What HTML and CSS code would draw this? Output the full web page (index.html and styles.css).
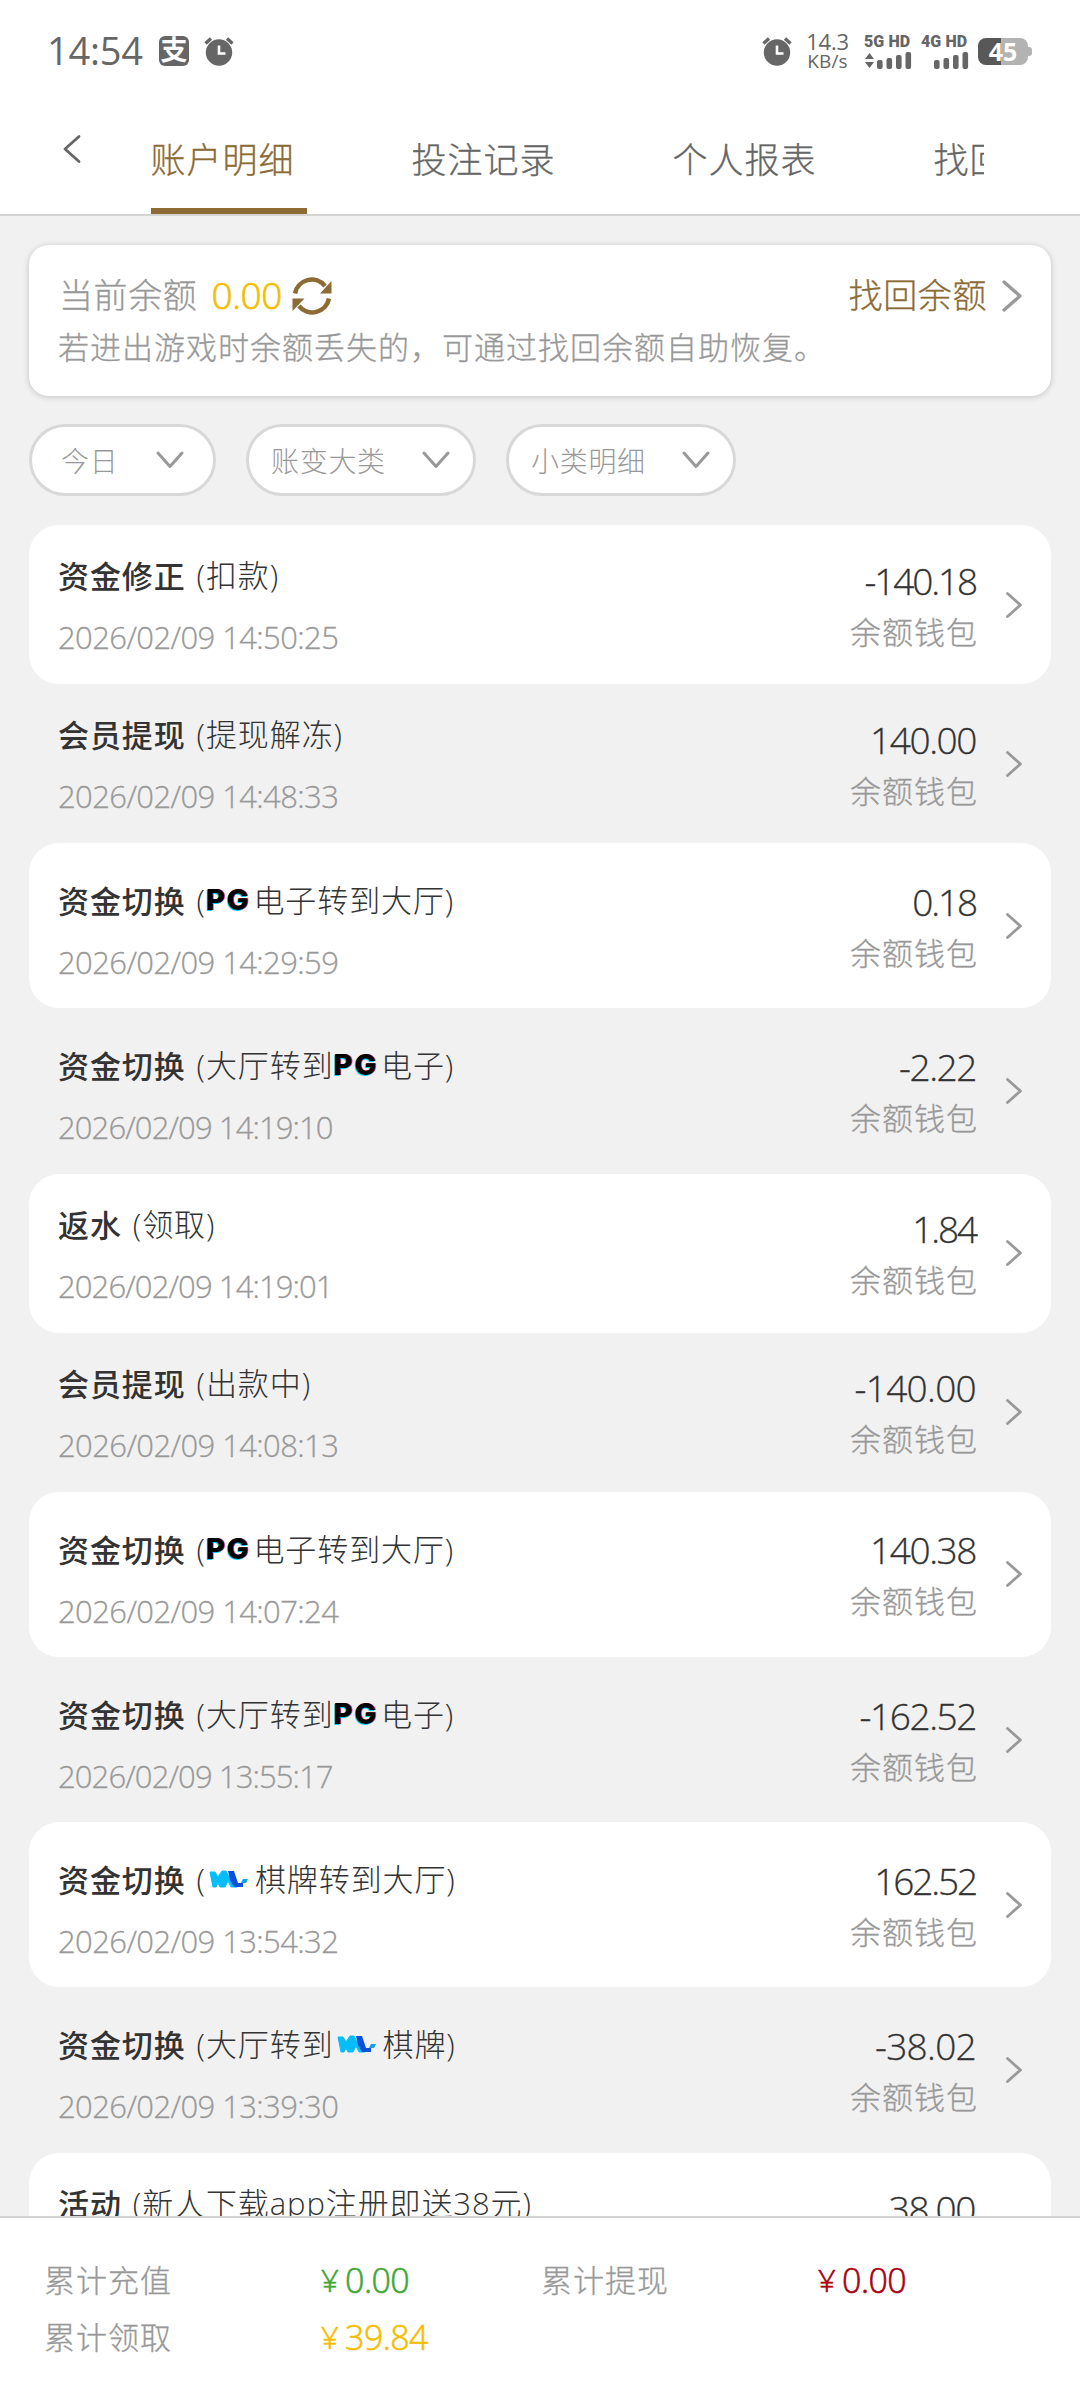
FILE: index.html
```html
<!DOCTYPE html>
<html lang="zh-CN">
<head>
<meta charset="utf-8">
<title>账户明细</title>
<link rel="stylesheet" href="styles.css">
</head>
<body>
<svg class="defs" width="0" height="0" aria-hidden="true">
  <symbol id="alarm" viewBox="0 0 30 30">
    <circle cx="15" cy="16.500" r="13.200" fill="currentColor"/>
    <path d="M1.500 7.500L7 2.500M28.500 7.500L23 2.500" stroke="currentColor" stroke-width="3.400"/>
    <path d="M15 9.500V17.500H21.500" stroke="#fff" stroke-width="2.600" fill="none"/>
  </symbol>
  <symbol id="right" viewBox="0 0 18 28"><path d="M2.500 2.500L15.500 14L2.500 25.500" fill="none" stroke="currentColor" stroke-width="2.800" stroke-linecap="round" stroke-linejoin="round"/></symbol>
  <symbol id="down" viewBox="0 0 28 18"><path d="M2 2L14 15.500L26 2" fill="none" stroke="currentColor" stroke-width="3" stroke-linecap="round" stroke-linejoin="round"/></symbol>
  <symbol id="wl" viewBox="0 0 49 30">
    <path d="M4 7H9L12 12L16 6H20L23 12L26 7L31 22H25L22 16L19 22H14L12 18L10 22H7Z" fill="#06bdfb" stroke="#06bdfb" stroke-linejoin="round"/>
    <path d="M22 6H28L32 18H37V22H28L24 15Z" fill="#0a52da"/>
    <path d="M37 14H42L40 18H35Z" fill="#0aa0ee"/>
  </symbol>
</svg>
<div class="screen">
  <div class="status">
    <span class="time">14:54</span>
    <span class="alipay">支</span>
    <svg class="alarm" width="30" height="30"><use href="#alarm"/></svg>
    <span class="fill"></span>
    <svg class="alarm2" width="30" height="30"><use href="#alarm"/></svg>
    <span class="speed"><span>14.3</span><span class="unit">KB/s</span></span>
    <span class="net"><span>5G HD</span>
      <svg width="48" height="17" fill="currentColor"><path d="M1 7L5.500 1L10 7ZM1 10H10L5.500 16Z"/><rect x="13" y="8" width="5.600" height="9" rx="2"/><rect x="22.500" y="6" width="5.600" height="11" rx="2"/><rect x="32" y="3" width="5.600" height="14" rx="2"/><rect x="41.500" y="0" width="5.600" height="17" rx="2"/></svg>
    </span>
    <span class="net"><span>4G HD</span>
      <svg width="48" height="17" fill="currentColor"><rect x="13" y="8" width="5.600" height="9" rx="2"/><rect x="22.500" y="6" width="5.600" height="11" rx="2"/><rect x="32" y="3" width="5.600" height="14" rx="2"/><rect x="41.500" y="0" width="5.600" height="17" rx="2"/></svg>
    </span>
    <span class="battery"><span class="level">45</span><span class="nub"></span></span>
  </div>
  <div class="header">
    <svg class="back" width="18" height="30" viewBox="0 0 18 30"><path d="M16 2.500L2 15L16 27.500" fill="none" stroke="#666" stroke-width="2.800" stroke-linecap="round" stroke-linejoin="round"/></svg>
    <div class="tabs">
      <span class="tab active">账户明细</span><span class="tab">投注记录</span><span class="tab">个人报表</span><span class="tab">找回余额</span>
    </div>
  </div>
  <div class="main">
    <div class="card">
      <div class="balance">
        <span>当前余额</span><span class="money">0.00</span>
        <svg width="40" height="40" viewBox="0 0 40 40"><path d="M3 17.500A17 17 0 0 1 33 10M37 22.500A17 17 0 0 1 7 30" fill="none" stroke="#8c6b35" stroke-width="4.600"/><path d="M39.500 5V17.500H28ZM.500 35V22.500H12.500Z" fill="#8c6b35"/></svg>
        <span class="fill"></span>
        <span class="recover">找回余额</span>
        <svg class="go" width="22" height="34"><use href="#right"/></svg>
      </div>
      <div class="hint">若进出游戏时余额丢失的，可通过找回余额自助恢复。</div>
    </div>
    <div class="filters">
      <div class="pill first"><span>今日</span><svg width="28" height="18"><use href="#down"/></svg></div>
      <div class="pill"><span>账变大类</span><svg width="28" height="18"><use href="#down"/></svg></div>
      <div class="pill"><span>小类明细</span><svg width="28" height="18"><use href="#down"/></svg></div>
    </div>
    <div class="list">
      <div class="row">
        <div class="info"><div class="title"><b>资金修正</b><span>(扣款)</span></div><div class="date">2026/02/09 14:50:25</div></div>
        <div class="sum"><div class="amount tight">-140.18</div><div class="wallet">余额钱包</div></div>
        <svg width="18" height="28"><use href="#right"/></svg>
      </div>
      <div class="row">
        <div class="info"><div class="title"><b>会员提现</b><span>(提现解冻)</span></div><div class="date">2026/02/09 14:48:33</div></div>
        <div class="sum"><div class="amount">140.00</div><div class="wallet">余额钱包</div></div>
        <svg width="18" height="28"><use href="#right"/></svg>
      </div>
      <div class="row tall">
        <div class="info"><div class="title"><b>资金切换</b><span>(<i class="pg">PG</i>电子转到大厅)</span></div><div class="date">2026/02/09 14:29:59</div></div>
        <div class="sum"><div class="amount tight">0.18</div><div class="wallet">余额钱包</div></div>
        <svg width="18" height="28"><use href="#right"/></svg>
      </div>
      <div class="row tall">
        <div class="info"><div class="title"><b>资金切换</b><span>(大厅转到<i class="pg">PG</i>电子)</span></div><div class="date narrow">2026/02/09 14:19:10</div></div>
        <div class="sum"><div class="amount">-2.22</div><div class="wallet">余额钱包</div></div>
        <svg width="18" height="28"><use href="#right"/></svg>
      </div>
      <div class="row">
        <div class="info"><div class="title"><b>返水</b><span>(领取)</span></div><div class="date narrow">2026/02/09 14:19:01</div></div>
        <div class="sum"><div class="amount tight">1.84</div><div class="wallet">余额钱包</div></div>
        <svg width="18" height="28"><use href="#right"/></svg>
      </div>
      <div class="row">
        <div class="info"><div class="title"><b>会员提现</b><span>(出款中)</span></div><div class="date">2026/02/09 14:08:13</div></div>
        <div class="sum"><div class="amount loose">-140.00</div><div class="wallet">余额钱包</div></div>
        <svg width="18" height="28"><use href="#right"/></svg>
      </div>
      <div class="row tall">
        <div class="info"><div class="title"><b>资金切换</b><span>(<i class="pg">PG</i>电子转到大厅)</span></div><div class="date">2026/02/09 14:07:24</div></div>
        <div class="sum"><div class="amount">140.38</div><div class="wallet">余额钱包</div></div>
        <svg width="18" height="28"><use href="#right"/></svg>
      </div>
      <div class="row tall">
        <div class="info"><div class="title"><b>资金切换</b><span>(大厅转到<i class="pg">PG</i>电子)</span></div><div class="date narrow">2026/02/09 13:55:17</div></div>
        <div class="sum"><div class="amount">-162.52</div><div class="wallet">余额钱包</div></div>
        <svg width="18" height="28"><use href="#right"/></svg>
      </div>
      <div class="row tall">
        <div class="info"><div class="title"><b>资金切换</b><span>(<svg class="wl" width="49" height="30"><use href="#wl"/></svg>棋牌转到大厅)</span></div><div class="date">2026/02/09 13:54:32</div></div>
        <div class="sum"><div class="amount tight">162.52</div><div class="wallet">余额钱包</div></div>
        <svg width="18" height="28"><use href="#right"/></svg>
      </div>
      <div class="row tall">
        <div class="info"><div class="title"><b>资金切换</b><span>(大厅转到<svg class="wl" width="49" height="30"><use href="#wl"/></svg>棋牌)</span></div><div class="date">2026/02/09 13:39:30</div></div>
        <div class="sum"><div class="amount loose">-38.02</div><div class="wallet">余额钱包</div></div>
        <svg width="18" height="28"><use href="#right"/></svg>
      </div>
      <div class="row last">
        <div class="info"><div class="title"><b>活动</b><span>(新人下载app注册即送38元)</span></div></div>
        <div class="sum"><div class="amount">38.00</div></div>
      </div>
    </div>
  </div>
  <div class="footer">
    <span>累计充值</span><span class="val green"><i>¥</i>0.00</span><span>累计提现</span><span class="val red"><i>¥</i>0.00</span>
    <span>累计领取</span><span class="val yellow"><i>¥</i>39.84</span>
  </div>
</div>
</body>
</html>
```
FILE: styles.css
```css
* { box-sizing: border-box; }
body { margin: 0; }
.defs { position: absolute; }
.screen {
  width: 1080px; height: 2400px; overflow: hidden;
  display: flex; flex-direction: column;
  background: #f1f1f1; color: #999;
  font-family: "Open Sans", "Noto Sans CJK SC", sans-serif;
  font-weight: 300; white-space: nowrap;
}
.screen svg { display: block; flex: none; }
.fill { flex: 1; }

.status {
  flex: none; height: 102px; padding: 0 52px 0 47px;
  display: flex; align-items: center; background: #fff; color: #666;
}
.time { width: 112px; font-size: 38px; line-height: 48px; margin-top: -2px; font-weight: 400; letter-spacing: -.2px; }
.alipay {
  width: 30px; height: 30px; border-radius: 6px; background: #666; color: #fff;
  font-size: 27px; line-height: 28px; font-weight: 700; text-align: center;
}
.alarm { margin-left: 15px; }
.alarm2 { margin-right: 14px; }
.speed {
  width: 43px; margin-right: 15px; display: flex; flex-direction: column; align-items: center;
  font-size: 22px; line-height: 20px; font-weight: 400; letter-spacing: -.2px;
}
.unit { font-size: 19px; letter-spacing: .2px; }
.net {
  width: 48px; margin-right: 9px; display: flex; flex-direction: column; gap: 3px;
  font: 900 16px/15px Roboto, sans-serif; letter-spacing: .1px;
}
.battery {
  position: relative; width: 50px; height: 27px; border-radius: 8px;
  background: linear-gradient(90deg, #585858 23px, #b3b3b3 23px);
  color: #fff; font: 700 25px/27px "Open Sans", sans-serif; text-align: center;
}
.nub { position: absolute; left: 50px; top: 9px; width: 4px; height: 9px; border-radius: 0 3px 3px 0; background: #b3b3b3; }

.header {
  flex: none; height: 114px; display: flex; align-items: flex-start;
  background: #fff; border-bottom: 2px solid #d5d5d5;
}
.back { margin: 32px 0 0 63px; }
.tabs { margin-left: 70px; width: 833px; height: 112px; overflow: hidden; display: flex; gap: 105px; }
.tab {
  flex: none; width: 156px; height: 112px; color: #666;
  font-size: 35px; line-height: 115px; letter-spacing: 1px; text-indent: -.5px;
  -webkit-text-stroke: .3px currentColor;
}
.active { color: #8c6b35; border-bottom: 6px solid #8c6b35; }

.main { flex: 1; min-height: 0; overflow: hidden; padding: 29px 29px 0; }
.card {
  height: 151px; border-radius: 20px; padding: 26px 28px 0 30px;
  background: #fff; box-shadow: 0 1px 6px rgba(0,0,0,.2);
  -webkit-text-stroke: .3px currentColor;
}
.balance { display: flex; align-items: center; height: 50px; font-size: 34px; line-height: 48px; letter-spacing: .6px; }
.balance span { margin-top: -2px; }
.balance .money { margin: -2px 10px 0 14px; color: #f5bd00; font-size: 37px; letter-spacing: -.4px; -webkit-text-stroke: .7px currentColor; }
.recover { color: #8c6b35; }
.go { margin-left: 14px; }
.hint { font-size: 31px; line-height: 48px; letter-spacing: 1px; margin: 2px 0 0 -1px; }

.filters { display: flex; gap: 30px; margin-top: 28px; }
.pill {
  width: 230px; height: 72px; padding: 0 23px 0 22px; border: 3px solid #d8d8d8; border-radius: 36px;
  display: flex; align-items: center; justify-content: space-between;
  background: #fff; font-size: 28px; letter-spacing: .7px;
}
.first { width: 187px; padding: 0 29px 0 29px; }

.list { margin-top: 29px; }
.row {
  height: 159px; padding: 0 28px 0 29px; border-radius: 30px;
  display: flex; align-items: center;
}
.tall { height: 165.3px; }
.row:nth-child(odd) { background: #fff; }
.info { flex: 1; align-self: flex-start; padding-top: 27px; }
.tall .info { padding-top: 34px; }
.title { display: flex; gap: 11px; height: 46px; font-size: 31px; line-height: 46px; letter-spacing: .9px; color: #333; }
.title span { display: flex; }
.title b { font-weight: 500; font-family: "Noto Sans CJK SC", sans-serif; }
.date { margin-top: 16px; font-size: 31px; line-height: 46px; letter-spacing: -.6px; -webkit-text-stroke: .3px currentColor; }
.narrow { letter-spacing: -.9px; }
.sum { text-align: right; margin-right: 27px; padding-top: 2px; }
.last .sum { align-self: flex-start; padding-top: 31px; margin-right: 46px; }
.amount { height: 50px; font-size: 37px; line-height: 50px; letter-spacing: -1.4px; color: #333; margin-right: 2px; -webkit-text-stroke: .3px currentColor; }
.tight { letter-spacing: -2.1px; }
.loose { letter-spacing: -.7px; }
.wallet { height: 52px; font-size: 31px; line-height: 52px; letter-spacing: 1px; margin-bottom: -2px; -webkit-text-stroke: .3px currentColor; }
.pg {
  width: 47.5px; font: 800 29px/46px Inter, sans-serif; letter-spacing: 2px; color: #000;
  text-shadow: -1px 1px 0 #0cf, 1px 0 0 #f45;
}
.title .wl { margin-top: 9px; }

.footer {
  flex: none; height: 184px; padding: 34px 0 0 44px; border-top: 2px solid #d5d5d5; background: #fff;
  display: grid; grid-template-columns: 277px 220px 277px 220px; grid-auto-rows: 57px;
  font-size: 31px; line-height: 57px; letter-spacing: 1px; -webkit-text-stroke: .3px currentColor;
}
.val { display: flex; gap: 7px; font-size: 34px; letter-spacing: -.6px; -webkit-text-stroke: .6px currentColor; }
.val i { font-style: normal; font-size: 31px; }
.green { color: #43a635; }
.red { color: #a8000f; }
.yellow { color: #f5bd00; }
```
